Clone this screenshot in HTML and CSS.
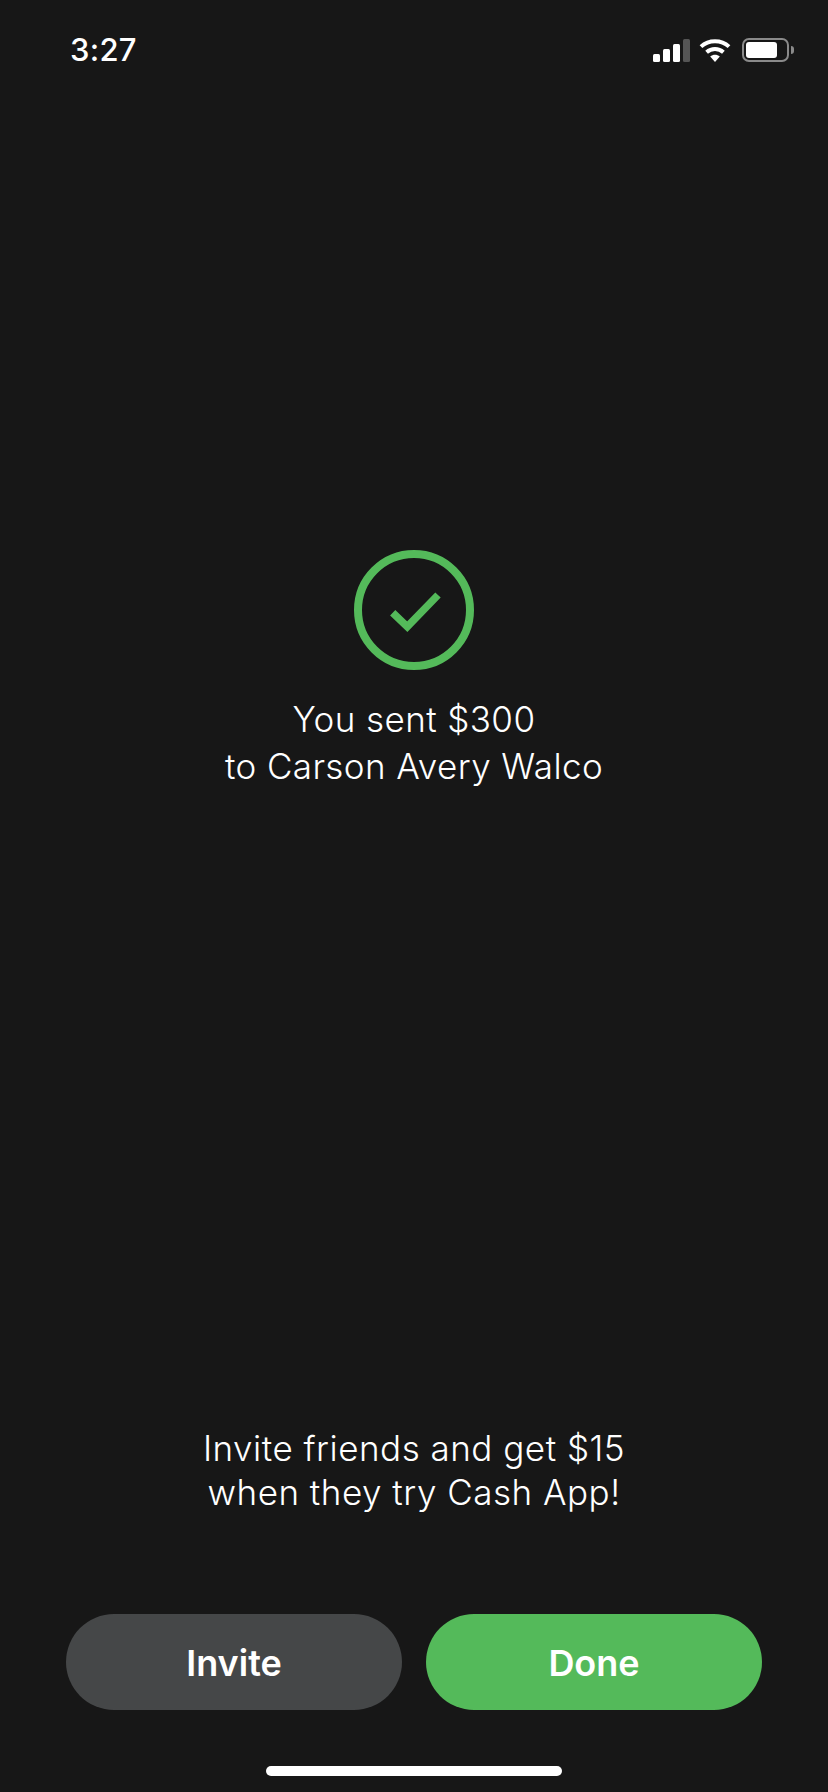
FILE: index.html
```html
<!DOCTYPE html>
<html lang="en">

<head>
    <meta charset="UTF-8">
    <meta name="viewport" content="width=device-width, initial-scale=1.0">
    <title>Payment sent</title>
    <link rel="stylesheet" href="styles.css">
</head>

<body>

    <div class="screen">
        <header class="status-bar">
            <span class="clock">3:27</span>
            <div class="status-icons">
                <div class="signal">
                    <span class="bar bar-1"></span>
                    <span class="bar bar-2"></span>
                    <span class="bar bar-3"></span>
                    <span class="bar bar-4"></span>
                </div>
                <svg class="wifi" width="32" height="24" viewBox="0 0 32 24">
                    <path d="M2 8.6C9.8 1.4 22.2 1.4 30 8.6" fill="none" stroke="#fff" stroke-width="4"/>
                    <path d="M7.6 14.2C12.4 9.9 19.6 9.9 24.4 14.2" fill="none" stroke="#fff" stroke-width="4"/>
                    <path d="M11.2 18.6C14 16.2 18 16.2 20.8 18.6L16 24Z" fill="#fff"/>
                </svg>
                <div class="battery">
                    <div class="battery-level"></div>
                </div>
                <div class="battery-nub"></div>
            </div>
        </header>

        <main class="result">
            <svg class="check" width="120" height="120" viewBox="0 0 120 120">
                <circle cx="60" cy="60" r="56" fill="none" stroke="#54ba5a" stroke-width="8"/>
                <path d="M38.7 62.7L53.3 76.7L84 45" fill="none" stroke="#54ba5a" stroke-width="7.5"/>
            </svg>
            <p class="message">You sent $300<br>to Carson Avery Walco</p>
        </main>

        <p class="invite-text">Invite friends and get $15<br>when they try Cash App!</p>

        <div class="buttons">
            <a class="btn btn-invite" href="#">Invite</a>
            <a class="btn btn-done" href="#">Done</a>
        </div>

        <div class="home-bar"></div>
    </div>

</body>

</html>
```

FILE: styles.css
```css
body {
    font-family: "Inter", "Liberation Sans", sans-serif;
    background-color: #171717;
    color: white;
    margin: 0;
    padding: 0;
}

.screen {
    height: 1792px;
    display: flex;
    flex-direction: column;
    overflow: hidden;
}

.status-bar {
    display: flex;
    justify-content: space-between;
    align-items: flex-end;
    height: 62px;
    padding: 0 34px 0 70px;
}

.clock {
    font-size: 31px;
    font-weight: 500;
    letter-spacing: 0.3px;
    line-height: 36px;
    margin-bottom: -6px;
}

.status-icons {
    display: flex;
    align-items: flex-end;
}

.signal {
    display: flex;
    align-items: flex-end;
    gap: 3px;
    margin-right: 9px;
}

.bar {
    display: block;
    width: 7px;
    background-color: white;
    border-radius: 1.5px;
}

.bar-1 {
    height: 8px;
}

.bar-2 {
    height: 13px;
}

.bar-3 {
    height: 18px;
}

.bar-4 {
    height: 23px;
    background-color: #555;
}

.wifi {
    display: block;
    margin-right: 11px;
}

.battery {
    box-sizing: border-box;
    width: 47px;
    height: 24px;
    border: 2px solid #8a8a8a;
    border-radius: 7px;
    padding: 2px;
}

.battery-level {
    width: 31px;
    height: 100%;
    background-color: white;
    border-radius: 3px;
}

.battery-nub {
    width: 3px;
    height: 8px;
    margin: 0 0 8px 2px;
    background-color: #8a8a8a;
    border-radius: 0 4px 4px 0;
}

.result {
    display: flex;
    flex-direction: column;
    align-items: center;
    margin-top: 488px;
}

.check {
    display: block;
}

.message {
    font-size: 35px;
    font-weight: 350;
    letter-spacing: 0.4px;
    line-height: 47px;
    text-align: center;
    margin: 26px 0 0;
}

.invite-text {
    font-size: 35px;
    font-weight: 350;
    letter-spacing: 0.5px;
    line-height: 44px;
    text-align: center;
    margin: 636px 0 0;
}

.buttons {
    display: flex;
    gap: 24px;
    padding: 0 66px;
    margin-top: 100px;
}

.btn {
    flex: 1;
    box-sizing: border-box;
    height: 96px;
    padding-top: 2px;
    border-radius: 48px;
    display: flex;
    align-items: center;
    justify-content: center;
    color: white;
    font-size: 36px;
    font-weight: 600;
    text-decoration: none;
}

.btn-invite {
    background-color: #454748;
}

.btn-done {
    background-color: #54ba5a;
}

.home-bar {
    width: 296px;
    height: 10px;
    margin: 56px auto 0;
    background-color: white;
    border-radius: 5px;
}
```
